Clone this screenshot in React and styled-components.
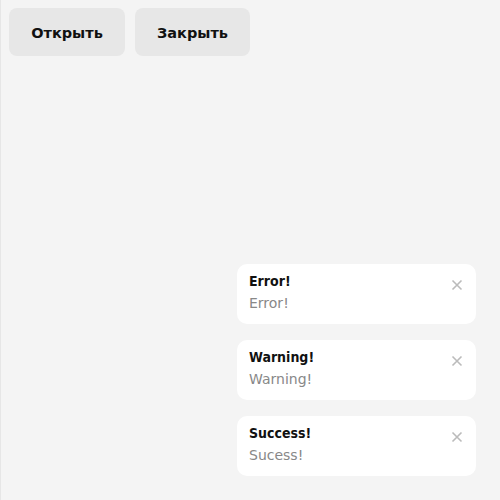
import React from 'react'
import styled, { createGlobalStyle } from 'styled-components'

const Global = createGlobalStyle`
  html, body {
    margin: 0;
    padding: 0;
    height: 100%;
    background: #f4f4f4;
    font-family: "DejaVu Sans", Verdana, sans-serif;
  }
  #root { height: 100%; }
`

const Page = styled.div`
  min-height: 100%;
  box-sizing: border-box;
  border-left: 1px solid #e6e6e6;
  padding: 8px;
`

const Toolbar = styled.div`
  display: flex;
  gap: 10px;
`

const Button = styled.button`
  width: ${p => p.$w}px;
  height: 48px;
  border: none;
  border-radius: 8px;
  background: #e7e7e7;
  color: #111;
  font-family: "DejaVu Sans", Verdana, sans-serif;
  font-size: 14.5px;
  font-weight: bold;
  padding-top: 2px;
  cursor: pointer;
`

const Stack = styled.div`
  position: fixed;
  right: 24px;
  bottom: 24px;
  display: flex;
  flex-direction: column;
  gap: 16px;
`

const Toast = styled.div`
  width: 239px;
  height: 60px;
  box-sizing: border-box;
  background: #fff;
  border-radius: 10px;
  padding: 8px 12px 0 12px;
  display: flex;
  justify-content: space-between;
  align-items: flex-start;
`

const Texts = styled.div`
  display: flex;
  flex-direction: column;
  gap: 4px;
`

const Title = styled.div`
  font-family: "DejaVu Sans Condensed", "DejaVu Sans", sans-serif;
  font-size: 14px;
  font-weight: bold;
  color: #111;
  line-height: 18px;
`

const Body = styled.div`
  font-size: 14px;
  color: #888;
  line-height: 18px;
`

const Close = styled.button`
  border: none;
  background: none;
  padding: 0;
  margin: 6px 0 0 0;
  width: 14px;
  height: 14px;
  display: flex;
  align-items: center;
  justify-content: center;
  cursor: pointer;
`

const toasts = [
  { title: 'Error!', body: 'Error!' },
  { title: 'Warning!', body: 'Warning!' },
  { title: 'Success!', body: 'Sucess!' },
]

const App = () => {
  return (
    <Page>
      <Global />
      <Toolbar>
        <Button $w={116}>Открыть</Button>
        <Button $w={115}>Закрыть</Button>
      </Toolbar>
      <Stack>
        {toasts.map(t => (
          <Toast key={t.title}>
            <Texts>
              <Title>{t.title}</Title>
              <Body>{t.body}</Body>
            </Texts>
            <Close>
              <svg width="12" height="12" viewBox="0 0 12 12">
                <path d="M1.5 1.5 L10.5 10.5 M10.5 1.5 L1.5 10.5" stroke="#bbb" strokeWidth="1.6" />
              </svg>
            </Close>
          </Toast>
        ))}
      </Stack>
    </Page>
  )
}

export default App
